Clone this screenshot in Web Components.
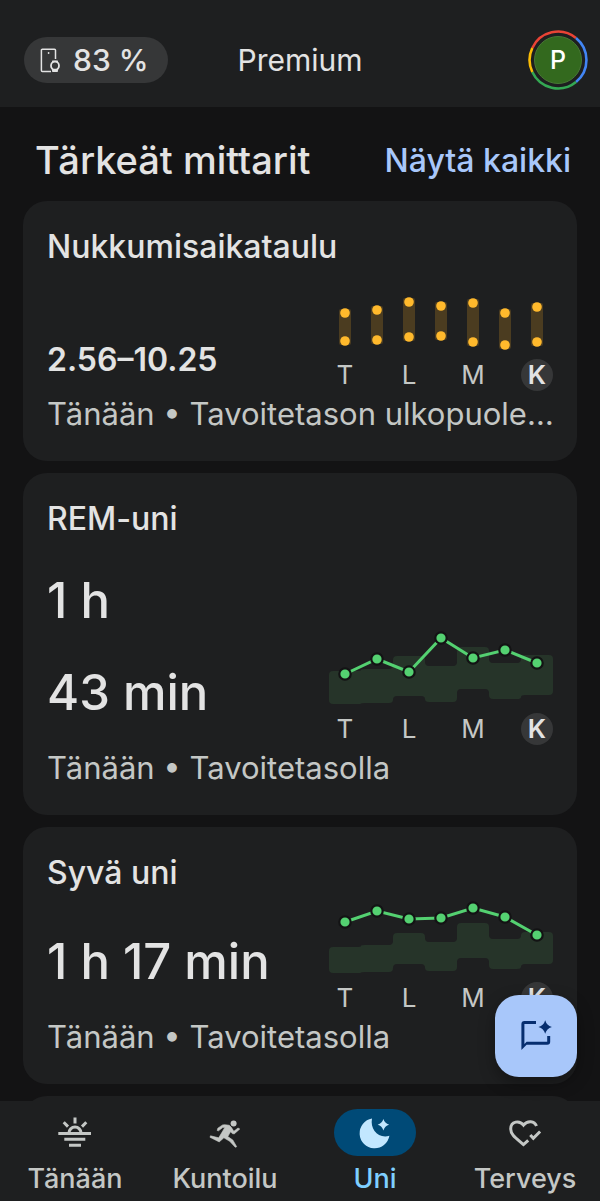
<!DOCTYPE html>
<html lang="fi">
<head>
<meta charset="utf-8">
<meta name="viewport" content="width=device-width, initial-scale=1">
<title>Uni</title>
<style>
  body {
    margin: 0;
    background: #131314;
    color: #e3e3e3;
    font-family: Inter, Roboto, sans-serif;
  }
</style>
</head>
<body>
<health-app>
  <top-bar slot="top" battery="83 %" initial="P">Premium</top-bar>

  <section-header>
    Tärkeät mittarit
    <a slot="action" href="#kaikki">Näytä kaikki</a>
  </section-header>

  <metric-card size="small">
    <span slot="title">Nukkumisaikataulu</span>
    <span slot="value">2.56–10.25</span>
    <range-chart slot="chart" ranges="44,72 41,71 33,68 37,67 34,73 44,76 38,73"></range-chart>
    <span slot="note">Tänään • Tavoitetason ulkopuolella</span>
  </metric-card>

  <metric-card>
    <span slot="title">REM-uni</span>
    <span slot="value">1 h<br>43 min</span>
    <trend-chart slot="chart" points="48 33 46 12 32 24 37"
      bands="45,78 43,77 30,70 40,76 21,63 37,73 29,69"></trend-chart>
    <span slot="note">Tänään • Tavoitetasolla</span>
  </metric-card>

  <metric-card>
    <span slot="title">Syvä uni</span>
    <span slot="value">1 h 17 min</span>
    <trend-chart slot="chart" points="27 16 24 23 13 22 40"
      bands="52,78 50,77 38,69 47,76 28,63 44,74 37,69"></trend-chart>
    <span slot="note">Tänään • Tavoitetasolla</span>
  </metric-card>

  <metric-card></metric-card>

  <chat-button slot="fab"></chat-button>

  <nav-bar slot="nav">
    <nav-item icon="today">Tänään</nav-item>
    <nav-item icon="fitness">Kuntoilu</nav-item>
    <nav-item icon="sleep" active>Uni</nav-item>
    <nav-item icon="health">Terveys</nav-item>
  </nav-bar>
</health-app>

<script>
class HealthApp extends HTMLElement {
  constructor() {
    super();
    this.attachShadow({ mode: 'open' }).innerHTML = `
      <style>
        :host {
          display: flex;
          flex-direction: column;
          height: 100vh;
        }
        main {
          flex: 1;
          min-height: 0;
          display: flex;
          flex-direction: column;
          gap: 12px;
          padding: 0 23px;
          overflow-y: auto;
          scrollbar-width: none;
        }
        footer {
          position: relative;
        }
        .fab {
          position: absolute;
          right: 23px;
          bottom: 100%;
          margin-bottom: 24px;
        }
      </style>
      <slot name="top"></slot>
      <main><slot></slot></main>
      <footer>
        <div class="fab"><slot name="fab"></slot></div>
        <slot name="nav"></slot>
      </footer>
    `;
  }
}

class TopBar extends HTMLElement {
  connectedCallback() {
    this.attachShadow({ mode: 'open' }).innerHTML = `
      <style>
        :host {
          display: block;
          flex: none;
          background: #1e1f20;
        }
        header {
          display: grid;
          grid-template-columns: 1fr auto 1fr;
          align-items: center;
          padding: 30px 12px 17px;
        }
        button {
          border: 0;
          padding: 0;
          color: inherit;
          font: inherit;
          background: none;
        }
        .battery {
          justify-self: start;
          display: flex;
          align-items: center;
          gap: 13px;
          height: 46px;
          margin-left: 12px;
          padding: 0 20px 0 16px;
          border-radius: 23px;
          background: #363738;
          font-size: 30px;
          font-weight: 500;
        }
        h1 {
          margin: 0;
          font-size: 30px;
          font-weight: 400;
          line-height: 46px;
        }
        .avatar {
          justify-self: end;
          display: grid;
          place-items: center;
          width: 60px;
          height: 60px;
          color: #fff;
          font-size: 25px;
          font-weight: 500;
        }
        .avatar > * {
          grid-area: 1 / 1;
        }
      </style>
      <header>
        <button class="battery">
          <svg width="20" height="26" viewBox="0 0 20 26" fill="none" stroke="currentColor" stroke-width="1.5" aria-hidden="true">
            <path d="M15.5 12V3.2a1 1 0 0 0-1-1H2.4a1 1 0 0 0-1 1v20.2a1 1 0 0 0 1 1H11"/>
            <circle cx="8.6" cy="6" r=".9" fill="currentColor" stroke="none"/>
            <path d="M12.3 13.5h5.4l.6 2.5h-6.6zM11.7 21.5h6.6l-.6 3.5h-5.4z" fill="currentColor" stroke="none"/>
            <circle cx="15" cy="18.7" r="4" stroke-width="1.8" fill="#363738"/>
          </svg>
          <span>${this.getAttribute('battery')}</span>
        </button>
        <h1><slot></slot></h1>
        <button class="avatar" aria-label="Tili">
          <svg width="60" height="60" viewBox="0 0 60 60" fill="none" stroke-width="2.6" aria-hidden="true">
            <path d="M4.3 18A28.4 28.4 0 0 1 48 8" stroke="#ea4335"/>
            <path d="M48 8A28.4 28.4 0 0 1 48 52" stroke="#4285f4"/>
            <path d="M48 52A28.4 28.4 0 0 1 4.3 42" stroke="#34a853"/>
            <path d="M4.3 42A28.4 28.4 0 0 1 4.3 18" stroke="#fbbc04"/>
            <circle cx="30" cy="30" r="23.5" fill="#33691e" stroke="#477834" stroke-width="1"/>
          </svg>
          <span>${this.getAttribute('initial')}</span>
        </button>
      </header>
    `;
  }
}

class SectionHeader extends HTMLElement {
  constructor() {
    super();
    this.attachShadow({ mode: 'open' }).innerHTML = `
      <style>
        :host {
          display: flex;
          flex: none;
          justify-content: space-between;
          align-items: center;
          padding: 30px 6px 6px 12px;
        }
        h2 {
          margin: 0;
          font-size: 38px;
          font-weight: 500;
          line-height: 46px;
        }
        ::slotted(a) {
          color: #a8c7fa;
          font-size: 32px;
          font-weight: 500;
          text-decoration: none;
        }
      </style>
      <h2><slot></slot></h2>
      <slot name="action"></slot>
    `;
  }
}

class MetricCard extends HTMLElement {
  constructor() {
    super();
    this.attachShadow({ mode: 'open' }).innerHTML = `
      <style>
        :host {
          display: block;
          flex: none;
          padding: 24px;
          border-radius: 24px;
          background: #1e1f20;
          --value-size: 49px;
          --value-line: 92px;
          --value-weight: 500;
        }
        :host([size="small"]) {
          --value-size: 32px;
          --value-line: 50px;
          --value-weight: 600;
        }
        h3, p {
          margin: 0;
        }
        h3 {
          min-height: 44px;
          font-size: 32px;
          font-weight: 500;
          line-height: 44px;
        }
        .body {
          display: flex;
          justify-content: space-between;
          align-items: flex-end;
        }
        .value {
          padding: 14px 0 6px;
          font-size: var(--value-size);
          font-weight: var(--value-weight);
          line-height: var(--value-line);
          white-space: nowrap;
        }
        .note {
          overflow: hidden;
          margin-right: -6px;
          color: #c4c7c5;
          font-size: 31px;
          line-height: 46px;
          white-space: nowrap;
          text-overflow: ellipsis;
        }
      </style>
      <h3><slot name="title"></slot></h3>
      <div class="body">
        <p class="value"><slot name="value"></slot></p>
        <slot name="chart"></slot>
      </div>
      <p class="note"><slot name="note"></slot></p>
    `;
  }
}

// Shared frame of the week charts: a plot over a row of day letters
class WeekChart extends HTMLElement {
  connectedCallback() {
    this.attachShadow({ mode: 'open' }).innerHTML = `
      <style>
        :host {
          display: block;
          flex: none;
          width: 224px;
        }
        svg {
          display: block;
        }
        .days {
          display: grid;
          grid-template-columns: repeat(7, 32px);
          color: #c4c7c5;
          font-size: 26px;
          line-height: 32px;
          text-align: center;
        }
        .today {
          border-radius: 50%;
          background: #363738;
          color: #e3e3e3;
          font-weight: 600;
        }
      </style>
      <svg width="224" height="${this.plotHeight}" aria-hidden="true">${this.plot()}</svg>
      <div class="days">
        <span>T</span><span></span><span>L</span><span></span><span>M</span><span></span><span class="today">K</span>
      </div>
    `;
  }

  pairs(name) {
    return this.getAttribute(name).split(' ').map((pair) => pair.split(',').map(Number));
  }
}

class RangeChart extends WeekChart {
  get plotHeight() {
    return 90;
  }

  plot() {
    return this.pairs('ranges').map(([top, bottom], i) => {
      const x = 16 + i * 32;
      return `
        <rect x="${x - 6}" y="${top - 4}" width="12" height="${bottom - top + 8}" rx="2" fill="#4b3c20"/>
        <circle cx="${x}" cy="${top}" r="4.8" fill="#ffb92c"/>
        <circle cx="${x}" cy="${bottom}" r="4.8" fill="#ffb92c"/>
      `;
    }).join('');
  }
}

class TrendChart extends WeekChart {
  get plotHeight() {
    return 87;
  }

  plot() {
    const points = this.getAttribute('points').split(' ').map((y, i) => [16 + i * 32, Number(y)]);
    return `
      <path d="${this.bandPath()}" fill="#263429"/>
      <polyline points="${points.join(' ')}" fill="none" stroke="#54d171" stroke-width="3"/>
      ${points.map(([x, y]) => `<circle cx="${x}" cy="${y}" r="5.7" fill="#54d171" stroke="#131314" stroke-width="2.2"/>`).join('')}
    `;
  }

  // Stepped outline of the target band, its corners rounded
  bandPath() {
    const bands = this.pairs('bands');
    const edge = (side) => bands.flatMap((band, i) => [[i * 32, band[side]], [i * 32 + 32, band[side]]]);
    const corners = [...edge(0), ...edge(1).reverse()];
    const towards = (from, to, radius) => {
      const length = Math.hypot(to[0] - from[0], to[1] - from[1]) || 1;
      return [0, 1].map((k) => from[k] + (to[k] - from[k]) / length * Math.min(radius, length / 2));
    };
    return corners.map((corner, i) => {
      const before = corners.at(i - 1);
      const after = corners[(i + 1) % corners.length];
      return `${i ? 'L' : 'M'}${towards(corner, before, 4)}Q${corner} ${towards(corner, after, 4)}`;
    }).join('') + 'Z';
  }
}

class ChatButton extends HTMLElement {
  constructor() {
    super();
    this.attachShadow({ mode: 'open' }).innerHTML = `
      <style>
        :host {
          display: block;
        }
        button {
          display: grid;
          place-items: center;
          width: 82px;
          height: 82px;
          border: 0;
          border-radius: 24px;
          background: #a8c7fa;
          color: #062e6f;
          box-shadow: 0 6px 16px rgba(0, 0, 0, .35);
        }
      </style>
      <button aria-label="Keskustele">
        <svg width="36" height="36" viewBox="0 0 36 36" fill="currentColor" aria-hidden="true">
          <path d="M3.4 32V6a3 3 0 0 1 3-3H18V6H6.4v20L8.6 23.8H29.2V18h3v5.8a3 3 0 0 1-3 3H8.6z"/>
          <path d="M27.2 2.3q1.3 5 6.7 6.7-5.4 1.7-6.7 6.7-1.3-5-6.7-6.7 5.4-1.7 6.7-6.7z"/>
        </svg>
      </button>
    `;
  }
}

class NavBar extends HTMLElement {
  constructor() {
    super();
    this.attachShadow({ mode: 'open' }).innerHTML = `
      <style>
        :host {
          display: block;
          background: #1e1f20;
        }
        nav {
          display: flex;
          padding: 8px 0 6px;
        }
        ::slotted(*) {
          flex: 1 1 0;
        }
      </style>
      <nav><slot></slot></nav>
    `;
  }
}

const navIcons = {
  today: `
    <path d="M1.3 18.5H34M7.3 24.3H28.3M12 30.3H24M18 2.5V8.5M6.7 7.3l4.3 4.3M29.3 7.3L25 11.6M11.9 18.2a6.1 6.1 0 0 1 12.2 0"
      fill="none" stroke="currentColor" stroke-width="3"/>`,
  fitness: `
    <circle cx="26.6" cy="8.4" r="3"/>
    <path d="M10.2 15.5L10.8 13.2 15.6 9.9Q18 9.3 22.3 10.3L24.3 12.3 26.8 16.3 31 13 32.8 14 27.2 18.9 25.3 18.6 23.5 16.8 20.8 21.6 25.8 25 29.7 31.7 28.3 32.3 22.7 26.3 16.9 22.8 12.2 26.9 3 22.3 3.5 20.8 11.7 22.8 17.8 12.6 15.7 12.6 11.5 15.8Z"
      stroke="currentColor" stroke-width=".6"/>`,
  sleep: `
    <path d="M15 3.5A15 15 0 1 0 32.4 20.8C21.5 24 12.8 14.5 15 3.5Z"/>
    <path d="M26.4 4q1.3 4.4 5.7 5.7-4.4 1.3-5.7 5.7-1.3-4.4-5.7-5.7 4.4-1.3 5.7-5.7z"/>`,
  health: `
    <path d="M29.5 11C27.5 5.7 20.5 5.1 16.5 10 12.5 5 3.7 6 3.7 14 3.7 20 9.5 23.5 16.5 29.5L21.2 25.3M23.3 20l3 3.3 6.8-6.8"
      fill="none" stroke="currentColor" stroke-width="3"/>`
};

class NavItem extends HTMLElement {
  connectedCallback() {
    const current = this.hasAttribute('active') ? 'aria-current="page"' : '';
    this.attachShadow({ mode: 'open' }).innerHTML = `
      <style>
        :host {
          display: block;
          color: #c4c7c5;
        }
        :host([active]) {
          color: #7fcfff;
        }
        a {
          display: flex;
          flex-direction: column;
          align-items: center;
          gap: 6px;
          color: inherit;
          font-size: 27px;
          font-weight: 500;
          line-height: 33px;
          text-decoration: none;
        }
        .icon {
          display: grid;
          place-items: center;
          width: 82px;
          height: 47px;
          border-radius: 24px;
        }
        :host([active]) .icon {
          background: #004a77;
          color: #c2e7ff;
        }
      </style>
      <a href="#${this.getAttribute('icon')}" ${current}>
        <span class="icon">
          <svg width="36" height="36" viewBox="0 0 36 36" fill="currentColor" aria-hidden="true">${navIcons[this.getAttribute('icon')]}</svg>
        </span>
        <slot></slot>
      </a>
    `;
  }
}

customElements.define('health-app', HealthApp);
customElements.define('top-bar', TopBar);
customElements.define('section-header', SectionHeader);
customElements.define('metric-card', MetricCard);
customElements.define('range-chart', RangeChart);
customElements.define('trend-chart', TrendChart);
customElements.define('chat-button', ChatButton);
customElements.define('nav-bar', NavBar);
customElements.define('nav-item', NavItem);
</script>
</body>
</html>
